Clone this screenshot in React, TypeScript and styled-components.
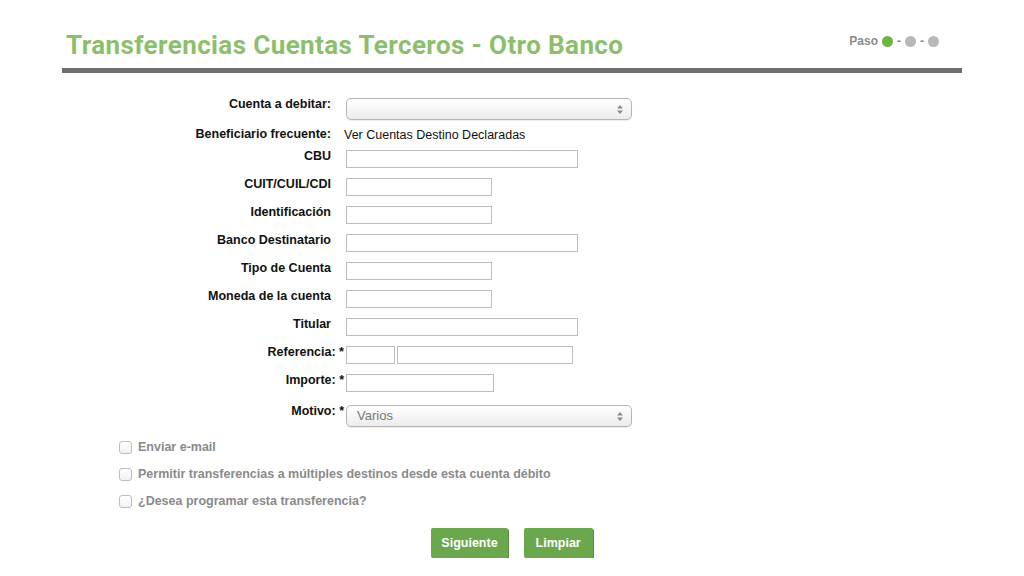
import React from "react";
import styled, { createGlobalStyle } from "styled-components";

const Global = createGlobalStyle`
  html, body { margin: 0; padding: 0; background: #ffffff; }
  body { font-family: "Liberation Sans", Arial, sans-serif; color: #111; }
  * { box-sizing: border-box; }
`;

const Page = styled.div`
  width: 900px;
  margin: 0 auto;
  padding-top: 30px;
`;

const Header = styled.header`
  display: flex;
  align-items: flex-start;
  justify-content: space-between;
  padding: 0 23px 0 4px;
  height: 43px;
  border-bottom: 5px solid #6e6e6e;
`;

const Title = styled.h1`
  margin: 0;
  font-family: "Roboto", "Liberation Sans", sans-serif;
  font-weight: 700;
  font-size: 26px;
  line-height: 30px;
  letter-spacing: 0.4px;
  color: #8dbe6c;
`;

const Steps = styled.div`
  display: flex;
  align-items: center;
  gap: 4px;
  margin-top: 4px;
  font-size: 12px;
  font-weight: 700;
  color: #8a8a8a;
`;

const Dot = styled.span<{ $active?: boolean }>`
  display: inline-block;
  width: 11px;
  height: 11px;
  border-radius: 50%;
  background: ${(p) => (p.$active ? "#6db33f" : "#b8b8b8")};
`;

const Form = styled.div`
  display: flex;
  flex-direction: column;
  gap: 10px;
  margin-top: 25px;
  margin-left: -61px;
`;

const Row = styled.div<{ $info?: boolean; $spaced?: boolean }>`
  display: grid;
  grid-template-columns: 345px auto;
  align-items: start;
  ${(p) => (p.$info ? "height: 12px; margin-top: -2px;" : "")}
  ${(p) => (p.$spaced ? "margin-top: 3px;" : "")}
`;

const Label = styled.label<{ $req?: boolean }>`
  text-align: right;
  font-weight: 700;
  font-size: 12.5px;
  line-height: 15px;
  margin-top: -1px;
  padding-right: ${(p) => (p.$req ? "2px" : "15px")};
  white-space: nowrap;
`;

const Value = styled.span`
  font-size: 12.5px;
  line-height: 15px;
  margin-left: -2px;
`;

const Inputs = styled.div`
  display: flex;
  gap: 2px;
`;

const TextInput = styled.input<{ $w: number }>`
  width: ${(p) => p.$w}px;
  height: 18px;
  margin: 0;
  border: 1px solid #bdbdbd;
  background: #fff;
  padding: 0 3px;
  font: inherit;
  outline: none;
`;

const SelectBox = styled.div<{ $w: number }>`
  position: relative;
  width: ${(p) => p.$w}px;
  height: 22px;
  border: 1px solid #b5b5b5;
  border-radius: 5px;
  background: linear-gradient(#ffffff, #ececec);
  box-shadow: 0 1px 1px rgba(0, 0, 0, 0.08);
  font-size: 13px;
  line-height: 20px;
  color: #777;
  padding-left: 10px;
`;

const Arrows = styled.svg`
  position: absolute;
  right: 7px;
  top: 5px;
`;

const Checks = styled.div`
  display: flex;
  flex-direction: column;
  gap: 13px;
  margin-top: 13px;
  margin-left: 57px;
`;

const CheckRow = styled.label`
  display: flex;
  align-items: center;
  gap: 6px;
  font-size: 12.5px;
  font-weight: 700;
  color: #8a8a8a;
  line-height: 14px;
`;

const Box = styled.span`
  width: 13px;
  height: 13px;
  border: 1px solid #bdbdbd;
  border-radius: 3px;
  background: linear-gradient(#fff, #f2f2f2);
`;

const Buttons = styled.div`
  display: flex;
  justify-content: center;
  gap: 16px;
  margin-top: 20px;
`;

const Button = styled.button`
  height: 30px;
  min-width: 69px;
  padding: 0 10px;
  border: none;
  border-radius: 2px;
  background: #6ba74c;
  color: #fff;
  font-family: "Liberation Sans", Arial, sans-serif;
  font-weight: 700;
  font-size: 12.5px;
  box-shadow: 1px 1px 0 #5a8f3f;
  cursor: pointer;
`;

const SelectArrows = () => (
  <Arrows width="8" height="11" viewBox="0 0 8 11">
    <path d="M4 1 L7 4.5 H1 Z" fill="#8a8a8a" />
    <path d="M4 10 L7 6.5 H1 Z" fill="#8a8a8a" />
  </Arrows>
);

type Field = { label: string; widths: number[]; req?: boolean };

const fields: Field[] = [
  { label: "CBU", widths: [232] },
  { label: "CUIT/CUIL/CDI", widths: [146] },
  { label: "Identificación", widths: [146] },
  { label: "Banco Destinatario", widths: [232] },
  { label: "Tipo de Cuenta", widths: [146] },
  { label: "Moneda de la cuenta", widths: [146] },
  { label: "Titular", widths: [232] },
  { label: "Referencia: *", widths: [49, 176], req: true },
  { label: "Importe: *", widths: [148], req: true },
];

export default function App() {
  return (
    <>
      <Global />
      <Page>
        <Header>
          <Title>Transferencias Cuentas Terceros - Otro Banco</Title>
          <Steps>
            <span>Paso</span>
            <Dot $active />
            <span>-</span>
            <Dot />
            <span>-</span>
            <Dot />
          </Steps>
        </Header>
        <Form>
          <Row>
            <Label>Cuenta a debitar:</Label>
            <SelectBox $w={286}>
              <SelectArrows />
            </SelectBox>
          </Row>
          <Row $info>
            <Label>Beneficiario frecuente:</Label>
            <Value>Ver Cuentas Destino Declaradas</Value>
          </Row>
          {fields.map((f) => (
            <Row key={f.label}>
              <Label $req={f.req}>{f.label}</Label>
              <Inputs>
                {f.widths.map((w, i) => (
                  <TextInput key={i} $w={w} />
                ))}
              </Inputs>
            </Row>
          ))}
          <Row $spaced>
            <Label $req>Motivo: *</Label>
            <SelectBox $w={286}>
              Varios
              <SelectArrows />
            </SelectBox>
          </Row>
        </Form>
        <Checks>
          <CheckRow>
            <Box />
            Enviar e-mail
          </CheckRow>
          <CheckRow>
            <Box />
            Permitir transferencias a múltiples destinos desde esta cuenta débito
          </CheckRow>
          <CheckRow>
            <Box />
            ¿Desea programar esta transferencia?
          </CheckRow>
        </Checks>
        <Buttons>
          <Button>Siguiente</Button>
          <Button>Limpiar</Button>
        </Buttons>
      </Page>
    </>
  );
}
